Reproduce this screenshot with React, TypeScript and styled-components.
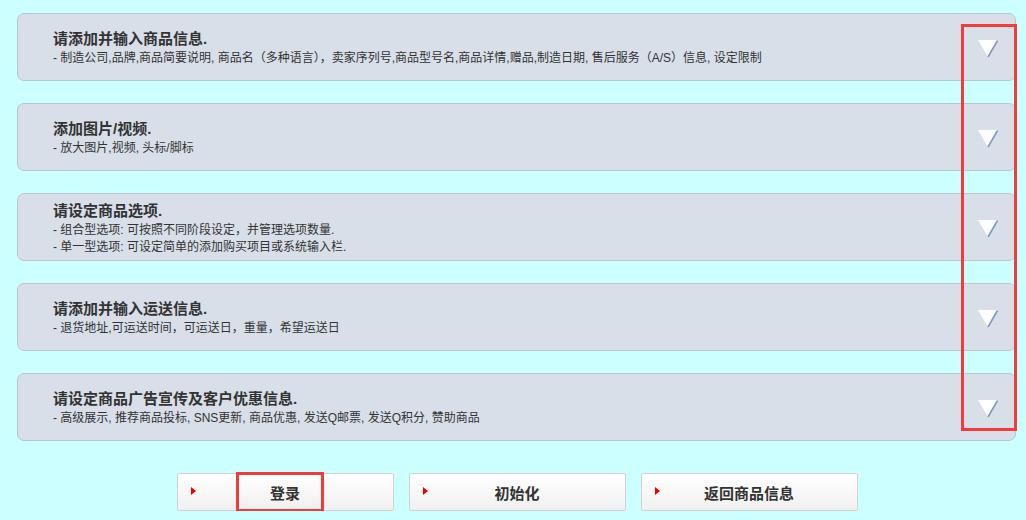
import React from "react";
import styled, { createGlobalStyle } from "styled-components";

const GlobalStyle = createGlobalStyle`
  html, body {
    margin: 0;
    padding: 0;
    background: #ccffff;
    font-family: "Liberation Sans", "Noto Sans CJK SC", sans-serif;
  }
`;

interface Section {
  title: string;
  lines: string[];
}

const sections: Section[] = [
  {
    title: "请添加并输入商品信息.",
    lines: [
      "- 制造公司,品牌,商品简要说明, 商品名（多种语言），卖家序列号,商品型号名,商品详情,赠品,制造日期, 售后服务（A/S）信息, 设定限制",
    ],
  },
  { title: "添加图片/视频.", lines: ["- 放大图片,视频, 头标/脚标"] },
  {
    title: "请设定商品选项.",
    lines: [
      "- 组合型选项: 可按照不同阶段设定，并管理选项数量.",
      "- 单一型选项: 可设定简单的添加购买项目或系统输入栏.",
    ],
  },
  { title: "请添加并输入运送信息.", lines: ["- 退货地址,可运送时间，可运送日，重量，希望运送日"] },
  {
    title: "请设定商品广告宣传及客户优惠信息.",
    lines: ["- 高级展示, 推荐商品投标, SNS更新, 商品优惠, 发送Q邮票, 发送Q积分, 赞助商品"],
  },
];

const Page = styled.div`
  position: relative;
  width: 999px;
  padding: 13px 0 0 17px;
`;

const List = styled.div`
  display: flex;
  flex-direction: column;
  gap: 22px;
`;

const Panel = styled.div`
  box-sizing: border-box;
  height: 68px;
  background: #d8dfe9;
  border: 1px solid #b9c5d3;
  border-radius: 7px;
  display: flex;
  align-items: center;
  padding: 0 16px 0 35px;
`;

const TextBlock = styled.div`
  flex: 1;
  display: flex;
  flex-direction: column;
  gap: 3px;
  margin-top: 1px;
`;

const Title = styled.div`
  font-size: 15px;
  font-weight: bold;
  color: #333;
  line-height: 18px;
`;

const Desc = styled.div`
  font-size: 12px;
  color: #333;
  line-height: 14px;
`;

const Toggle = styled.svg`
  width: 22px;
  height: 20px;
  margin-top: 4px;
`;

const Highlight = styled.div<{ $x: number; $y: number; $w: number; $h: number }>`
  position: absolute;
  left: ${(p) => p.$x}px;
  top: ${(p) => p.$y}px;
  width: ${(p) => p.$w}px;
  height: ${(p) => p.$h}px;
  box-sizing: border-box;
  border: 3px solid #f33b3b;
  pointer-events: none;
`;

const ButtonRow = styled.div`
  display: flex;
  justify-content: center;
  gap: 15px;
  margin-top: 32px;
  padding-left: 1px;
`;

const Button = styled.button`
  position: relative;
  box-sizing: border-box;
  width: 217px;
  height: 38px;
  border: 1px solid #d2d2d2;
  border-radius: 2px;
  background: linear-gradient(#ffffff, #f0f0f0);
  box-shadow: 0 1px 0 #e4e4e4;
  font-family: "Liberation Sans", "Noto Sans CJK SC", sans-serif;
  font-size: 15px;
  font-weight: bold;
  color: #333;
  cursor: pointer;
  padding: 0;
`;

const Arrow = styled.span`
  position: absolute;
  left: 13px;
  top: 13px;
  width: 0;
  height: 0;
  border-top: 4px solid transparent;
  border-bottom: 4px solid transparent;
  border-left: 5px solid #ee0000;
`;

const DownTriangle = () => (
  <Toggle viewBox="0 0 22 20">
    <polygon points="1,1 21,1 11,18" fill="#ffffff" />
    <polyline points="20.5,1.5 11,18" stroke="#7e98c4" strokeWidth="1.6" fill="none" />
  </Toggle>
);

export default function App() {
  return (
    <>
      <GlobalStyle />
      <Page>
        <List>
          {sections.map((s) => (
            <Panel key={s.title}>
              <TextBlock>
                <Title>{s.title}</Title>
                {s.lines.map((l) => (
                  <Desc key={l}>{l}</Desc>
                ))}
              </TextBlock>
              <DownTriangle />
            </Panel>
          ))}
        </List>
        <ButtonRow>
          <Button>
            <Arrow />
            登录
          </Button>
          <Button>
            <Arrow />
            初始化
          </Button>
          <Button>
            <Arrow />
            返回商品信息
          </Button>
        </ButtonRow>
        <Highlight $x={961} $y={24} $w={56} $h={407} />
        <Highlight $x={236} $y={472} $w={88} $h={40} />
      </Page>
    </>
  );
}
